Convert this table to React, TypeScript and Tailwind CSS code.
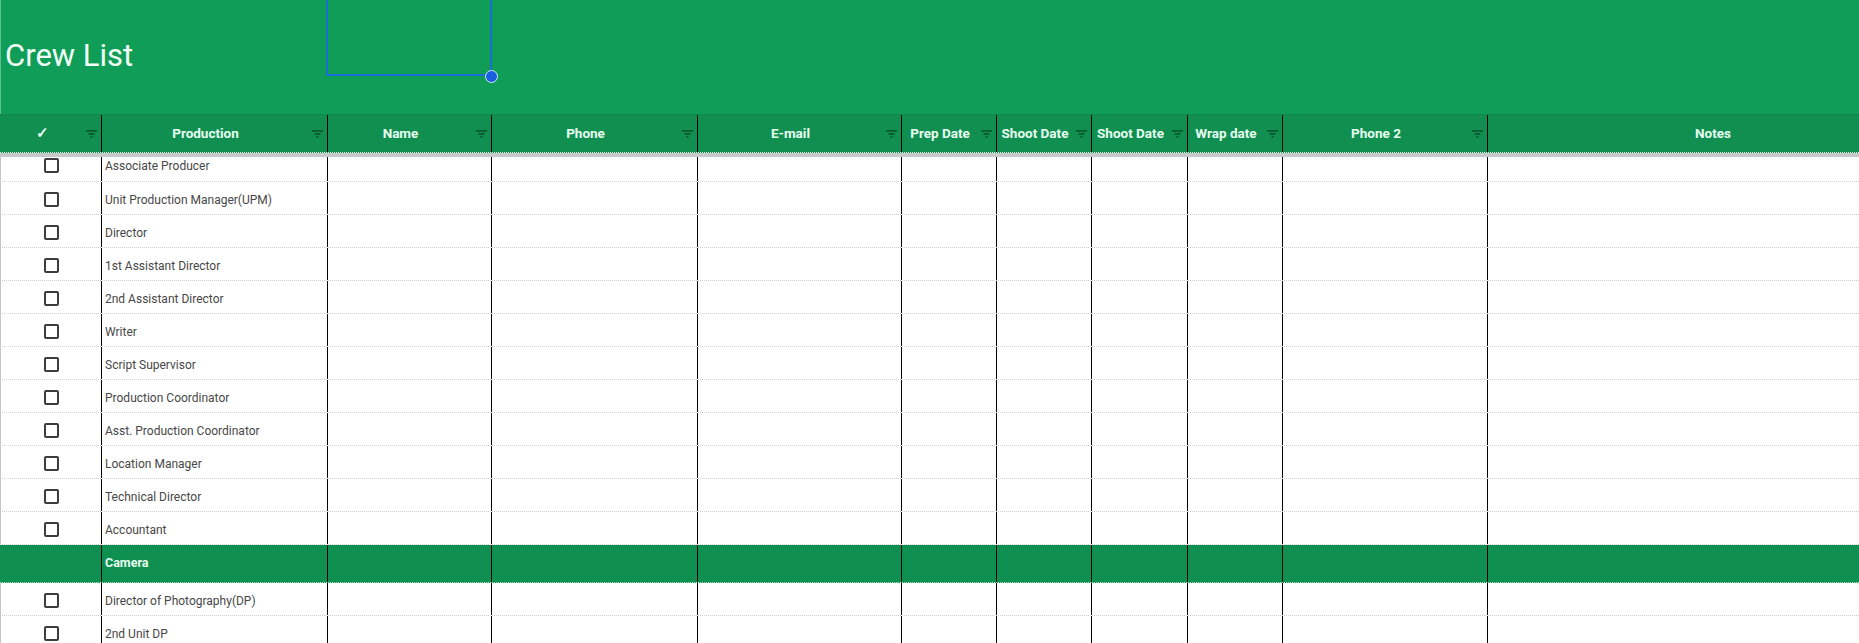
import React from "react";

const cols = ["102px", "226px", "164px", "206px", "204px", "95px", "95px", "96px", "95px", "205px", "450px"];
const gridTemplate = "grid grid-cols-[102px_226px_164px_206px_204px_95px_95px_96px_95px_205px_450px]";

const headers = ["Production", "Name", "Phone", "E-mail", "Prep Date", "Shoot Date", "Shoot Date", "Wrap date", "Phone 2"];

const group1 = [
  "Associate Producer",
  "Unit Production Manager(UPM)",
  "Director",
  "1st Assistant Director",
  "2nd Assistant Director",
  "Writer",
  "Script Supervisor",
  "Production Coordinator",
  "Asst. Production Coordinator",
  "Location Manager",
  "Technical Director",
  "Accountant",
];

const group2 = ["Director of Photography(DP)", "2nd Unit DP"];

function FilterIcon() {
  return (
    <svg width="11" height="8" viewBox="0 0 11 8" className="shrink-0">
      <rect x="0" y="0" width="11" height="1.8" fill="#075a2f" />
      <rect x="2.5" y="3" width="6" height="1.8" fill="#075a2f" />
      <rect x="4.5" y="6" width="2" height="1.8" fill="#075a2f" />
    </svg>
  );
}

function Checkbox() {
  return <div className="w-[15px] h-[15px] border-2 border-[#3d3d3d] rounded-[2px] bg-white" />;
}

function Row({ label, first }: { label: string; first?: boolean }) {
  const h = first ? "h-[25px]" : "h-[33px]";
  const align = first ? "items-start pt-[1px]" : "items-center pt-[3px]";
  return (
    <div className={`${gridTemplate} ${h} border-b border-dotted border-[#cfcfcf]`}>
      <div className={`flex ${align} justify-center border-r border-black border-l border-l-[#c4c4c4]`}>
        <Checkbox />
      </div>
      <div className={`flex ${align} pl-[3px] border-r border-black text-[12px] text-[#474747] whitespace-nowrap overflow-hidden`}>
        <span className="leading-[16px]">{label}</span>
      </div>
      {cols.slice(2).map((_, i) => (
        <div key={i} className={i < 8 ? "border-r border-black" : ""} />
      ))}
    </div>
  );
}

export default function App() {
  return (
    <div
      className="w-[1859px] h-[643px] overflow-hidden bg-white relative"
      style={{ fontFamily: "Roboto, 'Liberation Sans', sans-serif" }}
    >
      {/* Title area */}
      <div className="h-[114px] bg-[#0f9d58] flex items-center pl-[4px] pb-[3px] border-l border-[#5fbf8c]">
        <span className="text-[31px] text-[#f2fff7] leading-none">Crew List</span>
      </div>
      {/* selection overlay */}
      <div className="absolute left-[326px] top-[-4px] w-[166px] h-[80px] border-2 border-[#1a6fd6]" />
      <div className="absolute left-[485px] top-[70px] w-[13px] h-[13px] rounded-full bg-[#1a5fe0] border border-[#cfe8ff]" />

      {/* Header row */}
      <div className={`${gridTemplate} h-[39px] bg-[#118f50] border-t border-[#0c7d44] border-b border-dotted border-b-[#d8f0e2]`}>
        <div className="relative flex items-center justify-center border-r border-black pr-[16px]">
          <span className="text-[15px] font-bold text-[#eafff2]">✓</span>
          <div className="absolute right-[4px] top-[15px]">
            <FilterIcon />
          </div>
        </div>
        {headers.map((h, i) => (
          <div key={i} className="relative flex items-center justify-center border-r border-black pr-[18px]">
            <span className="text-[13.5px] font-bold text-[#e6fff0] whitespace-nowrap">{h}</span>
            <div className="absolute right-[4px] top-[15px]">
              <FilterIcon />
            </div>
          </div>
        ))}
        <div className="flex items-center justify-center">
          <span className="text-[13.5px] font-bold text-[#e6fff0]">Notes</span>
        </div>
      </div>
      <div className="h-[4px] bg-[#c9c9c9]" />

      {group1.map((l, i) => (
        <Row key={i} label={l} first={i === 0} />
      ))}

      {/* Camera group row */}
      <div className={`${gridTemplate} h-[38px] bg-[#0f8f50] border-b border-dotted border-[#a8e6c4]`}>
        <div className="border-r border-black" />
        <div className="flex items-center pl-[3px] border-r border-black">
          <span className="text-[12.5px] font-bold text-[#e6fff0]">Camera</span>
        </div>
        {cols.slice(2).map((_, i) => (
          <div key={i} className={i < 8 ? "border-r border-black" : ""} />
        ))}
      </div>

      {group2.map((l, i) => (
        <Row key={i} label={l} />
      ))}
    </div>
  );
}
